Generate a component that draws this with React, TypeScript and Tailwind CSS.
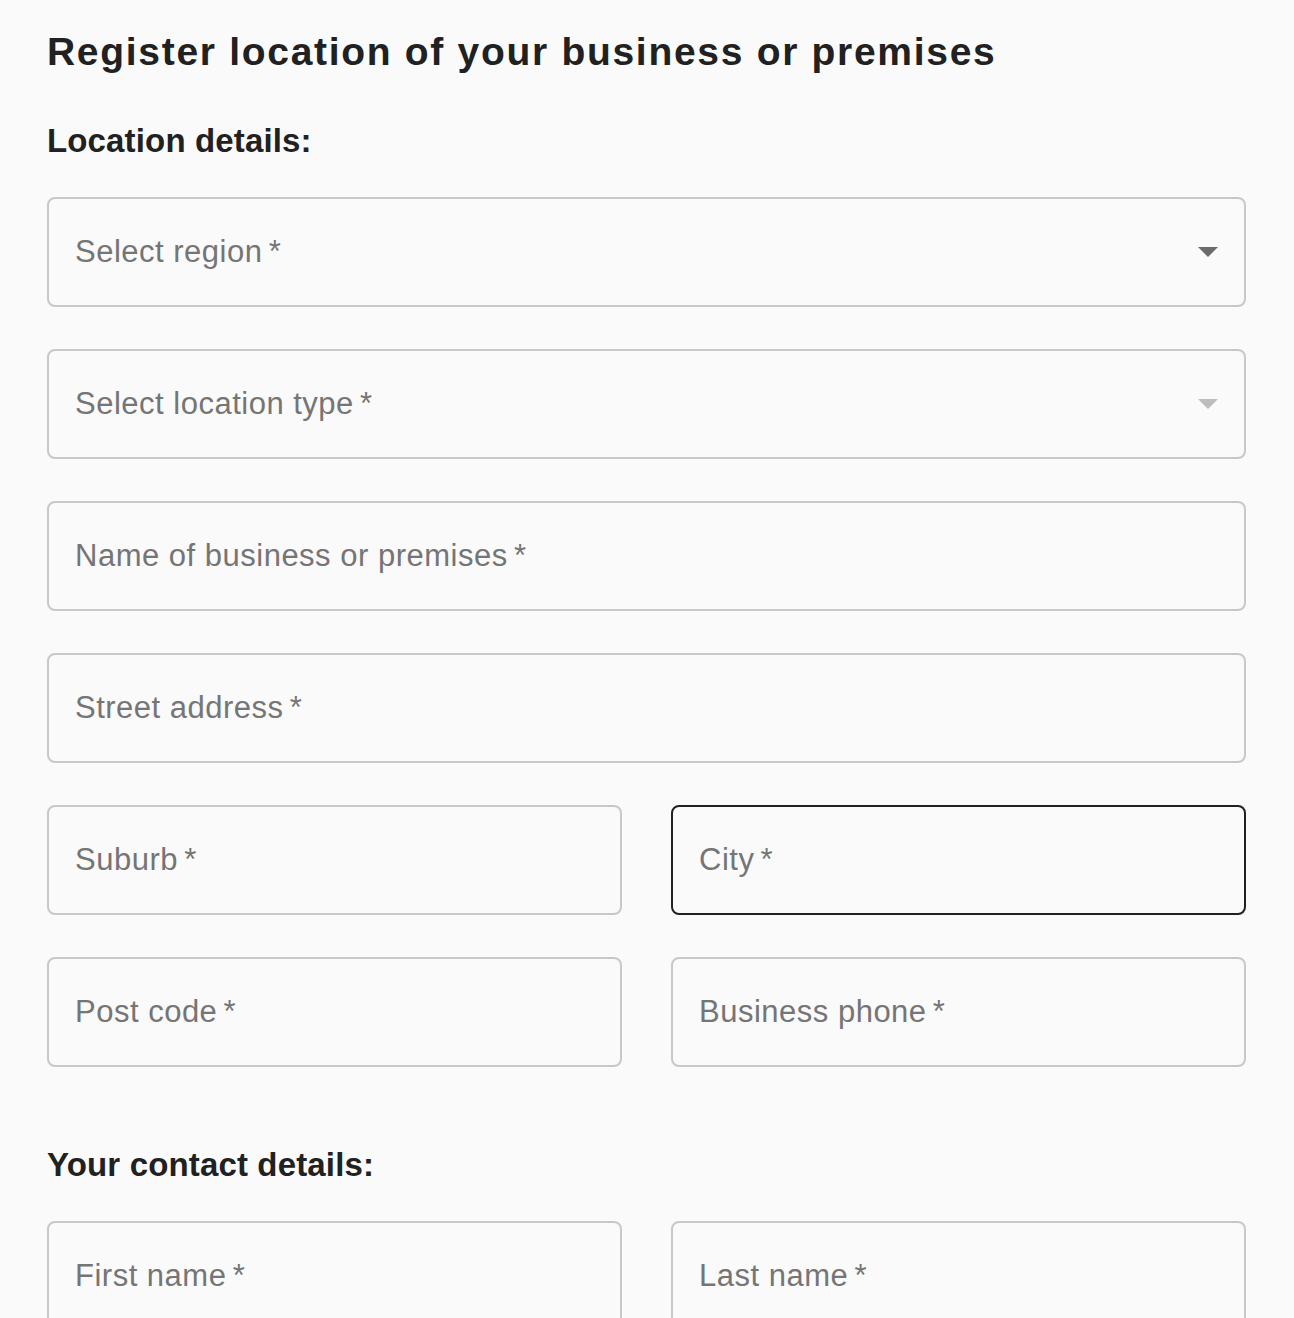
import React from "react";

function Field({
  label,
  focused = false,
  select = false,
  disabled = false,
}: {
  label: string;
  focused?: boolean;
  select?: boolean;
  disabled?: boolean;
}) {
  return (
    <div
      className={
        "relative flex h-[110px] items-center rounded-[8px] border-2 bg-[#fafafa] pl-[26px] pr-[26px] " +
        (focused ? "border-[#212121]" : "border-[#c8c8c8]")
      }
    >
      <span className="text-[31px] leading-[36px] tracking-[0.5px] text-[#757575]">
        {label}
        <span className="tracking-normal">{"\u2009*"}</span>
      </span>
      {select && (
        <svg
          className="absolute right-[26px] top-1/2 -translate-y-1/2"
          width="20"
          height="10"
          viewBox="0 0 20 10"
        >
          <path d="M0 0 L20 0 L10 10 Z" fill={disabled ? "#bdbdbd" : "#6b6b6b"} />
        </svg>
      )}
    </div>
  );
}

export default function App() {
  return (
    <div
      className="min-h-[1318px] bg-[#fafafa] pl-[47px] pr-[48px] pt-[30px] text-[#212121]"
      style={{ fontFamily: '"Liberation Sans", Arial, sans-serif' }}
    >
      <h1 className="text-[39px] font-bold leading-[44px] tracking-[1.7px]">
        Register location of your business or premises
      </h1>
      <h2 className="mt-[47px] text-[33px] font-bold leading-[40px] tracking-[0.15px]">
        Location details:
      </h2>
      <div className="mt-[36px] flex flex-col gap-[42px]">
        <Field label="Select region" select />
        <Field label="Select location type" select disabled />
        <Field label="Name of business or premises" />
        <Field label="Street address" />
        <div className="grid grid-cols-2 gap-x-[49px] gap-y-[42px]">
          <Field label="Suburb" />
          <Field label="City" focused />
          <Field label="Post code" />
          <Field label="Business phone" />
        </div>
      </div>
      <h2 className="mt-[78px] text-[33px] font-bold leading-[40px] tracking-[0.15px]">
        Your contact details:
      </h2>
      <div className="mt-[36px] grid grid-cols-2 gap-x-[49px] gap-y-[42px]">
        <Field label="First name" />
        <Field label="Last name" />
      </div>
    </div>
  );
}
